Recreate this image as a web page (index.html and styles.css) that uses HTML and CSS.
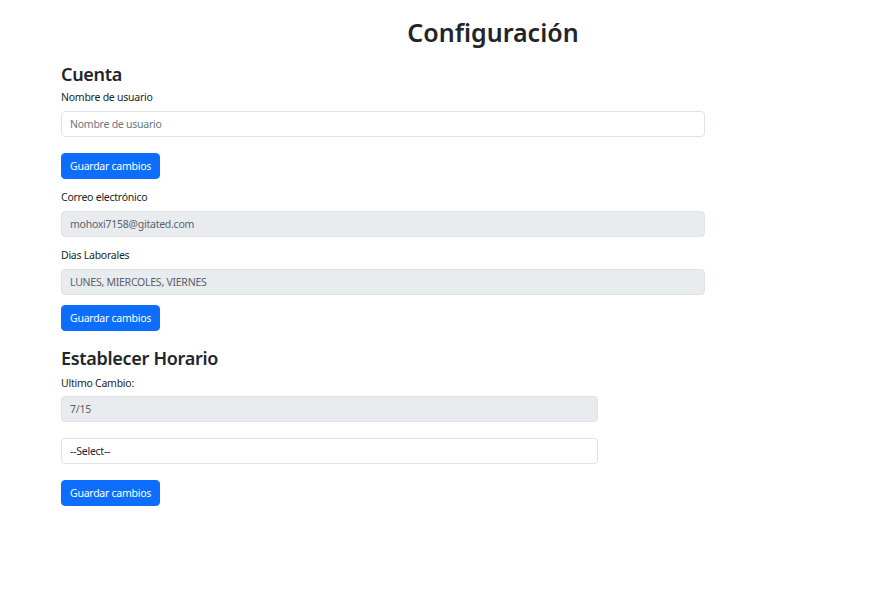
FILE: index.html
```html
<!DOCTYPE html>
<html lang="es">
<head>
<meta charset="utf-8">
<title>Configuración</title>
<link rel="stylesheet" href="styles.css">
</head>
<body>
<h1 class="title">Configuración</h1>
<main class="page">
  <section class="section">
    <h2 class="section-title">Cuenta</h2>
    <label class="label" for="user">Nombre de usuario</label>
    <input id="user" class="field" type="text" placeholder="Nombre de usuario">
    <button class="btn btn-gap">Guardar cambios</button>
    <label class="label label-after-btn">Correo electrónico</label>
    <div class="field field-disabled">mohoxi7158@gitated.com</div>
    <label class="label label-after-field">Dias Laborales</label>
    <div class="field field-disabled">LUNES, MIERCOLES, VIERNES</div>
    <button class="btn btn-gap-sm">Guardar cambios</button>
  </section>
  <section class="section narrow">
    <h2 class="section-title section-title-2">Establecer Horario</h2>
    <label class="label label-tight">Ultimo Cambio:</label>
    <div class="field field-disabled field-tight">7/15</div>
    <div class="field field-select">--Select--</div>
    <button class="btn btn-gap">Guardar cambios</button>
  </section>
</main>
</body>
</html>
```
FILE: styles.css
```css
* { box-sizing: border-box; }
html, body {
  margin: 0;
  background: #ffffff;
  color: #212529;
  font-family: "Noto Sans", "Open Sans", sans-serif;
}
.title {
  margin: 15px 0 0;
  padding-left: 114px;
  text-align: center;
  font-size: 25px;
  line-height: 34px;
  font-weight: 600;
}
.page {
  padding-left: 61px;
  width: 705px;
}
.section {
  display: flex;
  flex-direction: column;
  align-items: flex-start;
}
.narrow { width: 537px; }
.section-title {
  margin: 13px 0 0;
  font-size: 18px;
  line-height: 24px;
  font-weight: 600;
  letter-spacing: -0.3px;
}
.section-title-2 { margin-top: 15px; }
.label {
  display: block;
  margin-top: 2px;
  font-size: 10.5px;
  letter-spacing: -0.25px;
  line-height: 18px;
}
.label-after-btn { margin-top: 9px; }
.label-after-field { margin-top: 9px; }
.label-tight { margin-top: 4px; }
.field {
  width: 100%;
  height: 26px;
  margin-top: 5px;
  padding: 0 8px;
  border: 1px solid #dee2e6;
  border-radius: 4px;
  background: #fff;
  font-family: inherit;
  font-size: 10.5px;
  letter-spacing: -0.25px;
  line-height: 24px;
  color: #212529;
  outline: none;
}
.field::placeholder { color: #6c757d; }
.field-disabled {
  background: #e9ecef;
  color: #59616a;
}
.field-tight { margin-top: 4px; }
.field-select { margin-top: 16px; }
.btn {
  height: 26px;
  padding: 0 8px;
  border: 1px solid #0d6efd;
  border-radius: 4px;
  background: #0d6efd;
  color: #fff;
  font-family: inherit;
  font-size: 10.5px;
  letter-spacing: -0.25px;
  line-height: 24px;
  cursor: pointer;
}
.btn-gap { margin-top: 16px; }
.btn-gap-sm { margin-top: 10px; }
```
